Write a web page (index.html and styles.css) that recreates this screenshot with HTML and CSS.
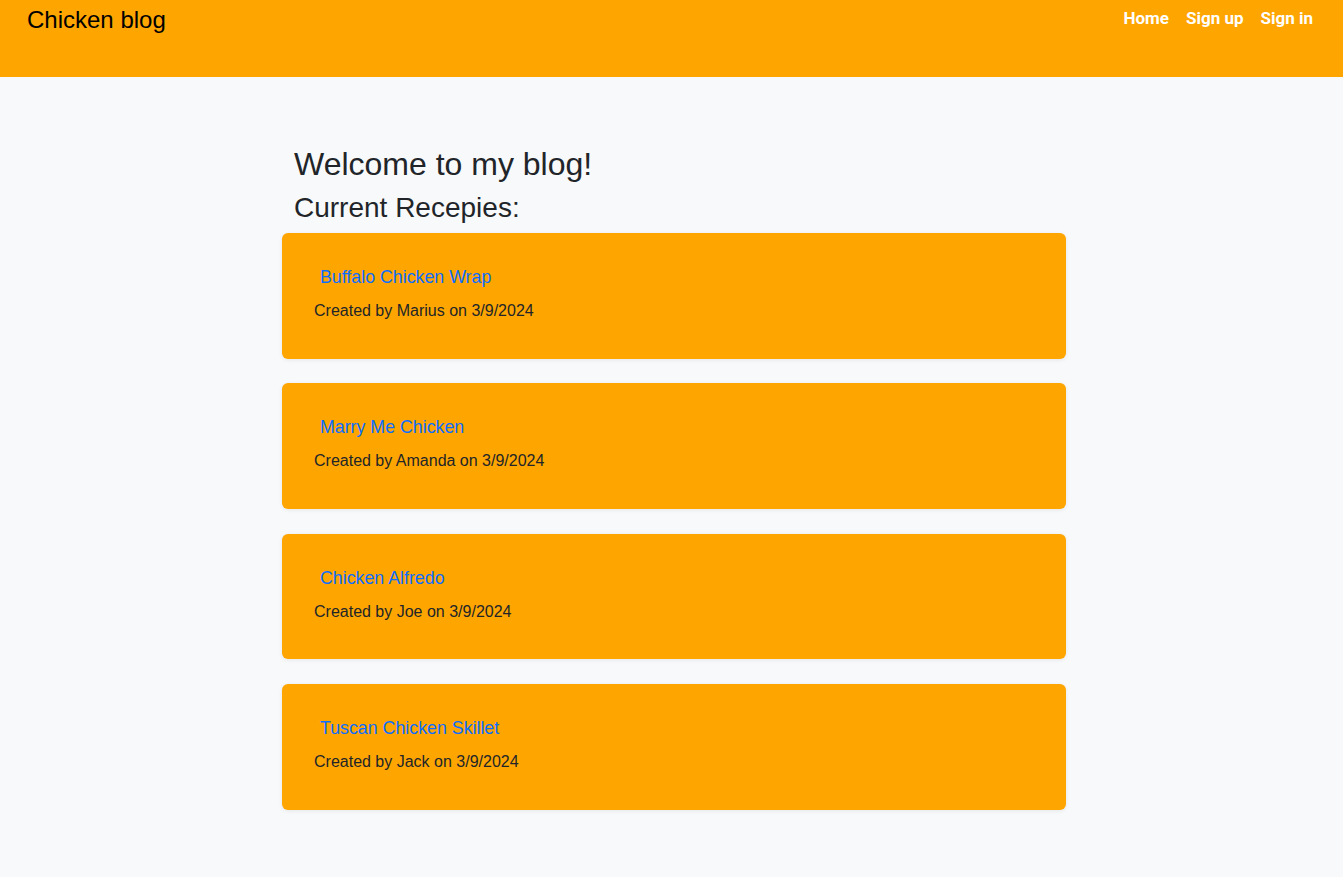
FILE: index.html
```html
<!DOCTYPE html>
<html lang="en">
<head>
<meta charset="utf-8">
<title>Chicken blog</title>
<link rel="stylesheet" href="styles.css">
</head>
<body>
<header class="topbar">
  <a class="brand" href="#">Chicken blog</a>
  <nav class="nav">
    <a href="#">Home</a>
    <a href="#">Sign up</a>
    <a href="#">Sign in</a>
  </nav>
</header>
<main class="container">
  <div class="intro">
    <h1 class="title">Welcome to my blog!</h1>
    <h2 class="subtitle">Current Recepies:</h2>
  </div>
  <div class="cards">
    <article class="card">
      <a class="card-title" href="#">Buffalo Chicken Wrap</a>
      <p class="card-meta">Created by Marius on 3/9/2024</p>
    </article>
    <article class="card">
      <a class="card-title" href="#">Marry Me Chicken</a>
      <p class="card-meta">Created by Amanda on 3/9/2024</p>
    </article>
    <article class="card">
      <a class="card-title" href="#">Chicken Alfredo</a>
      <p class="card-meta">Created by Joe on 3/9/2024</p>
    </article>
    <article class="card">
      <a class="card-title" href="#">Tuscan Chicken Skillet</a>
      <p class="card-meta">Created by Jack on 3/9/2024</p>
    </article>
  </div>
</main>
</body>
</html>
```
FILE: styles.css
```css
* { box-sizing: border-box; }
html, body {
  margin: 0;
  padding: 0;
}
body {
  background: #f8f9fa;
  font-family: "Liberation Sans", Arial, sans-serif;
  color: #212529;
  min-height: 877px;
}
.topbar {
  background: #ffa500;
  height: 77px;
  display: flex;
  justify-content: space-between;
  align-items: flex-start;
  padding: 0 30px 0 27px;
}
.brand {
  font-size: 24px;
  line-height: 1.2;
  color: #000;
  text-decoration: none;
  margin-top: 6px;
}
.nav {
  display: flex;
  gap: 17px;
  margin-top: 7px;
}
.nav a {
  font-family: Roboto, "Liberation Sans", sans-serif;
  font-weight: 700;
  font-size: 17px;
  line-height: 23px;
  color: #fff;
  text-decoration: none;
}
.container {
  width: 784px;
  margin-left: calc(50% - 389.5px);
  padding-top: 68px;
  padding-bottom: 40px;
}
.intro {
  padding-left: 12px;
}
.title {
  font-size: 32px;
  font-weight: 400;
  line-height: 1.2;
  margin: 0 0 8px;
}
.subtitle {
  font-size: 28px;
  font-weight: 400;
  line-height: 1.2;
  margin: 0 0 8px;
}
.cards {
  display: flex;
  flex-direction: column;
  gap: 24.7px;
}
.card {
  background: #ffa500;
  border-radius: 6px;
  box-shadow: 0 1px 4px rgba(0, 0, 0, 0.08);
  height: 125.7px;
  padding: 33px 32px 0 32px;
  display: flex;
  flex-direction: column;
  align-items: flex-start;
}
.card-title {
  font-size: 17.8px;
  line-height: 22px;
  color: #0d6efd;
  text-decoration: none;
  padding-left: 6px;
}
.card-meta {
  font-size: 16px;
  line-height: 24px;
  margin: 11px 0 0;
  color: #212529;
}
```
